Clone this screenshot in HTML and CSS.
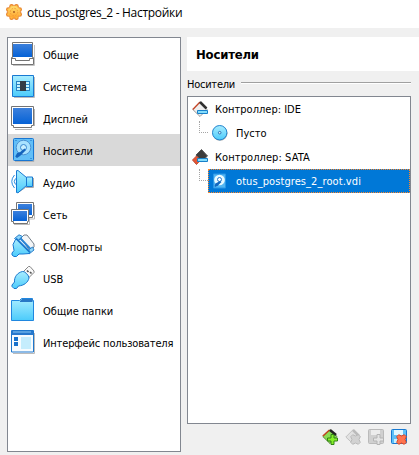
FILE: index.html
```html
<!DOCTYPE html>
<html lang="ru">
<head>
<meta charset="utf-8">
<title>otus_postgres_2 - Настройки</title>
<link rel="stylesheet" href="styles.css">
</head>
<body>
<svg class="defs" width="0" height="0">
  <defs>
    <linearGradient id="sky" x1="0" y1="0" x2="0" y2="1"><stop offset="0" stop-color="#a9edff"/><stop offset="1" stop-color="#4bcbfb"/></linearGradient>
    <linearGradient id="blue" x1="0" y1="0" x2="0" y2="1"><stop offset="0" stop-color="#3c80dc"/><stop offset="1" stop-color="#0562d6"/></linearGradient>
    <linearGradient id="gold" x1="0" y1="0" x2="0" y2="1"><stop offset="0" stop-color="#ffe070"/><stop offset="1" stop-color="#ffa22c"/></linearGradient>
    <symbol id="screen" viewBox="0 0 24 24">
      <path d="M2 23.500h21.500V3" fill="none" stroke="#c4c4c4"/>
      <path d="M1.500 .5h20v15h1v7h-22v-7h1z" fill="#fff" stroke="#747474"/>
      <path d="M2 2h19v13H2z" fill="url(#blue)"/>
      <path d="M1 16.500h3.500v2h14v-2h4" fill="none" stroke="#747474"/>
    </symbol>
    <symbol id="display" viewBox="0 0 24 24">
      <path d="M4 23.500h17M23.500 3v17" fill="none" stroke="#b5b5b5"/>
      <path d="M.5 .5h22v19h-2v2h-18v-2h-2z" fill="#fff" stroke="#747474"/>
      <path d="M2 2h19v16H2z" fill="url(#blue)"/>
    </symbol>
    <symbol id="plus" viewBox="0 0 11 11"><path d="M4 .5h3v3.500h3.500v3H7v3.500H4V7H.5V4H4z"/></symbol>
    <symbol id="cross" viewBox="0 0 11 11"><path d="M.7 2.700l2-2L5.500 2l2.800-1.300 2 2L9 5.500l1.300 2.800-2 2L5.500 9l-2.800 1.300-2-2L2 5.500z"/></symbol>
  </defs>
</svg>
<header class="titlebar">
  <svg class="gear" viewBox="0 0 16 16"><g fill="#e8832a"><circle cx="8" cy="8" r="6.500"/><circle cx="5.600" cy="2.300" r="2.300"/><circle cx="10.400" cy="2.300" r="2.300"/><circle cx="13.700" cy="5.600" r="2.300"/><circle cx="13.700" cy="10.400" r="2.300"/><circle cx="10.400" cy="13.700" r="2.300"/><circle cx="5.600" cy="13.700" r="2.300"/><circle cx="2.300" cy="10.400" r="2.300"/><circle cx="2.300" cy="5.600" r="2.300"/></g><g fill="#ffc04a"><circle cx="5.600" cy="2.500" r="1.300"/><circle cx="10.400" cy="2.500" r="1.300"/><circle cx="13.500" cy="5.600" r="1.300"/><circle cx="13.500" cy="10.400" r="1.300"/><circle cx="10.400" cy="13.500" r="1.300"/><circle cx="5.600" cy="13.500" r="1.300"/><circle cx="2.500" cy="10.400" r="1.300"/><circle cx="2.500" cy="5.600" r="1.300"/></g><circle cx="8" cy="8" r="6" fill="url(#gold)"/><circle cx="8" cy="8" r="3.700" fill="none" stroke="#f39a35" stroke-dasharray="1.500 1.400"/><circle cx="8" cy="8" r=".9" fill="#a0531b"/></svg>
  <h1>otus_postgres_2 - Настройки</h1>
</header>
<main class="dialog">
  <nav class="categories">
    <a class="category"><svg class="icon"><use href="#screen"/></svg><span>Общие</span></a>
    <a class="category"><svg class="icon" viewBox="0 0 24 24"><path d="M3 23.500h20.500V3" fill="none" stroke="#bbb"/><path d="M1.500 1.500h21v21h-21z" fill="url(#sky)" stroke="#1879d2"/><path d="M5 7h14v10H5z" fill="#2783c5"/><path d="M6 8h3v2H6zm0 3h3v2H6zm0 3h3v2H6zm9-6h3v2h-3zm0 3h3v2h-3zm0 3h3v2h-3z" fill="#c5f4ff"/><path d="M9 7h6v10H9z" fill="#333b45"/></svg><span>Система</span></a>
    <a class="category"><svg class="icon"><use href="#display"/></svg><span>Дисплей</span></a>
    <a class="category selected"><svg class="icon" viewBox="0 0 24 24"><path d="M4 23.700h18.700V3" fill="none" stroke="#aaa"/><rect x="2.500" y=".5" width="20" height="22" rx="1" fill="#62bff7" stroke="#1876d2"/><circle cx="12.500" cy="9.500" r="7.300" fill="#a8e2ff" stroke="#4b91d1"/><circle cx="12.500" cy="9.500" r="3" fill="#c8efff" stroke="#3886cf"/><path d="M13.500 10.500l1.500 1.500-6 6-3 2-1.800-1.500 2-3.500 3-1z" fill="#1464bd"/><path d="M4.500 2.500h1m14 0h1m-1 18h1" stroke="#176dc3"/></svg><span>Носители</span></a>
    <a class="category"><svg class="icon" viewBox="0 0 24 24"><path d="M7 22.500l7.500-5h8V8" fill="none" stroke="#aaa"/><path d="M5.500.7l1.500-.2 8.500 7v8L7 22.800l-1.500-.3z" fill="url(#sky)" stroke="#1879d2"/><path d="M15.500 7h6v9.500h-6z" fill="url(#sky)" stroke="#1879d2"/><path d="M3.500 5Q-2 11.500 3.500 18M4.500 8.500Q2 11.500 4.500 14.500" fill="none" stroke="#278ce0"/></svg><span>Аудио</span></a>
    <a class="category"><svg class="icon" viewBox="0 0 24 24"><path d="M23.500 3v14H19M18.500 11v11.500H3" fill="none" stroke="#bbb"/><path d="M5.500.5h17v13h-1v2h-15v-2h-1z" fill="#fff" stroke="#747474"/><path d="M7 2h14v11H7z" fill="url(#blue)"/><path d="M.5 7.500h17v12h-1v2h-14v-2h-2z" fill="#fff" stroke="#747474"/><path d="M2 9h14v10H2z" fill="url(#blue)"/></svg><span>Сеть</span></a>
    <a class="category"><svg class="icon" viewBox="0 0 24 24"><path d="M10 4l3-3h3l7 9v3l-4 4z" fill="#f2f5f7" stroke="#747f8a"/><path d="M3.500 4.500L8 .8l3.500 1.700-5 5zM17.500 16l4-3 1.500 3-5 4z" fill="#8fd6fa" stroke="#2a7fc9"/><path d="M2 10.500l2.500-5 2-.5L19 17.500l-.5 2-6.500.5H8l-2.500 2.500H3L1 21v-2l2-2.500z" fill="url(#sky)" stroke="#1879d2"/><path d="M5 4.500L18.500 18" stroke="#1573cb" stroke-width="1.500"/><path d="M9 4l10 10.500" stroke="#2a86d6" stroke-width="2"/></svg><span>COM-порты</span></a>
    <a class="category"><svg class="icon" viewBox="0 0 24 24"><path d="M12.500 5.500l5-5h1.500l4 4.500v1.500l-5 5z" fill="#f9f9f9" stroke="#858585"/><path d="M16 4.500l1.500 1.500m1.500 0l1.500 1.500" stroke="#555" stroke-width="1.700"/><path d="M11.500 5.500Q13 5 15.500 7.500T18 12c-1 4.500-5 7.500-10.500 8l-2 2.500H3l-2-2v-1.500l2.500-3C3 11 6.500 6.500 11.500 5.500z" fill="url(#sky)" stroke="#1b78cd"/></svg><span>USB</span></a>
    <a class="category"><svg class="icon" viewBox="0 0 24 24"><path d="M.5 2.500h8l2-2h11v2h1v20H.5z" fill="url(#sky)" stroke="#2087df"/><path d="M9 3l2-2h10.500v3H9z" fill="#2978c6"/></svg><span>Общие папки</span></a>
    <a class="category"><svg class="icon" viewBox="0 0 24 24"><path d="M2 23.500h21.500V3" fill="none" stroke="#bbb"/><path d="M.5.500h22v21.500H.5z" fill="#f7fcff" stroke="#1d77cd"/><path d="M1 1h21v4H1z" fill="#2878cc"/><path d="M2 2h18" stroke="#8acaf5"/><path d="M10 7h10v12H10z" fill="#c5edfd"/><path d="M3 7h4v4H3zm0 5h4v4H3z" fill="#1772cc"/></svg><span class="t-ui">Интерфейс пользователя</span></a>
  </nav>
  <section class="page">
    <h2>Носители</h2>
    <div class="group"><span>Носители</span><i></i></div>
    <div class="tree">
      <div class="row"><svg class="small" viewBox="0 0 16 16"><path d="M.8 8.500L8 1l7 7.500-7 7z" fill="#eee" stroke="#999"/><path d="M.8 8.500L8 1" stroke="#c74627" stroke-width="1.300"/><path d="M8 1l6.500 6.500" stroke="#303030" stroke-width="2.500"/><path d="M5.500 9.500h10v3h-10z" fill="#83dcfb" stroke="#1880c9"/></svg><span>Контроллер: IDE</span></div>
      <div class="row child"><i class="branch"></i><svg class="small" viewBox="0 0 16 16"><circle cx="8" cy="8.300" r="7.500" fill="#aaa"/><circle cx="7.700" cy="7.700" r="7.200" fill="url(#sky)" stroke="#2385cf"/><circle cx="7.700" cy="7.700" r="1.300" fill="#d9f6ff" stroke="#2872b4"/></svg><span>Пусто</span></div>
      <div class="row"><svg class="small" viewBox="0 0 16 16"><path d="M4 6l5.500-5.500 6 6.500L9 13z" fill="#3c3c3c" stroke="#555"/><path d="M.5 11l4-4 4 4-4 4.500z" fill="#e65534" stroke="#bb4d36"/><path d="M5.500 9.500h10v3h-10z" fill="#83dcfb" stroke="#1880c9"/></svg><span class="t-sata">Контроллер: SATA</span></div>
      <div class="row child"><i class="branch"></i><div class="highlight"><svg class="small" viewBox="0 0 16 16"><path d="M1.500 1h12v14h-12z" fill="#52b6f3" stroke="#2b96e5"/><circle cx="7.500" cy="7" r="5.300" fill="#e8faff"/><circle cx="7.500" cy="6.500" r="2" fill="#fff" stroke="#2678cd"/><path d="M8 8l1.500 1L6 12.500 3 14l-.5-1 1-2.500z" fill="#1368bf"/></svg><span class="t-vdi">otus_postgres_2_root.vdi</span></div></div>
    </div>
    <div class="tools">
      <svg class="small" viewBox="0 0 16 16"><path d="M.8 7.500L8 .8l7 6.700-7 7z" fill="#8cdc55" stroke="#5d8b42"/><path d="M.8 7L7.500 1" stroke="#c34622" stroke-width="1.500"/><path d="M8 1l6 5" stroke="#222" stroke-width="2.500"/><use href="#plus" x="5" y="5" width="11" height="11" fill="#84ee28" stroke="#318315"/></svg>
      <svg class="small" viewBox="0 0 16 16"><path d="M.8 8L8 .8l7 7-7 7z" fill="#e1e1e1" stroke="#c2c2c2"/><path d="M8 1l6 6" stroke="#bbb" stroke-width="2.500"/><use href="#cross" x="5" y="5" width="11" height="11" fill="#d2d2d2" stroke="#b9b9b9"/></svg>
      <svg class="small" viewBox="0 0 16 16"><rect x=".5" y=".5" width="15" height="14" rx="1" fill="#d0d0d0" stroke="#bababa"/><path d="M3 1h9v5H3z" fill="#ececec"/><use href="#plus" x="5" y="5" width="11" height="11" fill="#e4e4e4" stroke="#b4b4b4"/></svg>
      <svg class="small" viewBox="0 0 16 16"><rect x=".5" y=".5" width="15" height="14" rx="1" fill="#5cc0f7" stroke="#1778d1"/><path d="M3 1h9v5H3z" fill="#e0f7ff"/><path d="M3 10h4v4H3z" fill="#c6efff"/><use href="#cross" x="5" y="5" width="11" height="11" fill="#ff744f" stroke="#dc4726"/></svg>
    </div>
  </section>
</main>
</body>
</html>
```
FILE: styles.css
```css
* { box-sizing: border-box; }
body { margin: 0; width: 419px; height: 455px; overflow: hidden; display: flex; flex-direction: column; background: #f0f0f0; color: #000; font: 11px/16px "DejaVu Sans Condensed", "DejaVu Sans", sans-serif; font-stretch: condensed; }
svg { display: block; flex: none; }
.defs { position: absolute; }
span { white-space: nowrap; }
.titlebar { height: 28px; flex: none; background: #fff; display: flex; padding: 4px 0 0 6px; }
.gear { width: 16px; height: 16px; }
h1 { margin: 0 0 0 5px; font: 12px/18px "Open Sans", sans-serif; letter-spacing: -0.3px; white-space: nowrap; }
.dialog { flex: 1; display: flex; gap: 6px; padding: 9px 0 0 7px; }
.categories { width: 174px; height: 415px; border: 1px solid #828790; background: #fff; flex: none; }
.category { height: 32px; display: flex; align-items: center; padding-left: 3px; gap: 8px; }
.category span { padding-top: 4px; }
.t-ui { letter-spacing: -0.15px; }
.selected { background: #d9d9d9; }
.icon { width: 24px; height: 24px; }
.page { flex: 1; min-width: 0; }
h2 { margin: 0; height: 34px; background: #fff; padding: 9px 0 0 9px; font: bold 13px/17px "DejaVu Sans Condensed", "DejaVu Sans", sans-serif; font-stretch: condensed; letter-spacing: -0.2px; }
.group { height: 25px; display: flex; padding-right: 8px; padding-top: 5px; letter-spacing: -0.25px; }
.group span { padding-top: 1px; }
.group i { margin: 6px 0 0 6px; flex: 1; height: 2px; border-top: 1px solid #a0a0a0; background: #fff; }
.tree { width: 224px; height: 328px; border: 1px solid #828790; background: #fff; }
.row { height: 24px; display: flex; align-items: center; padding-left: 4px; gap: 7px; }
.row span { padding-top: 2px; }
.small { width: 16px; height: 16px; }
.child { padding-left: 11px; gap: 0; }
.child > .small { margin: 0 8px 0 4px; }
.branch { width: 9px; height: 12px; margin-bottom: 12px; border: dotted #a5a5a5; border-width: 0 0 1px 1px; flex: none; }
.highlight { height: 24px; flex: 1; display: flex; align-items: center; gap: 8px; padding-left: 3px; color: #fff; background: #0078d7; border: 1px dotted #ff8728; }
.t-vdi { letter-spacing: 0.08px; }
.t-sata { letter-spacing: 0.08px; }
.tools { display: flex; gap: 7px; padding: 5px 0 0 135px; }
```
